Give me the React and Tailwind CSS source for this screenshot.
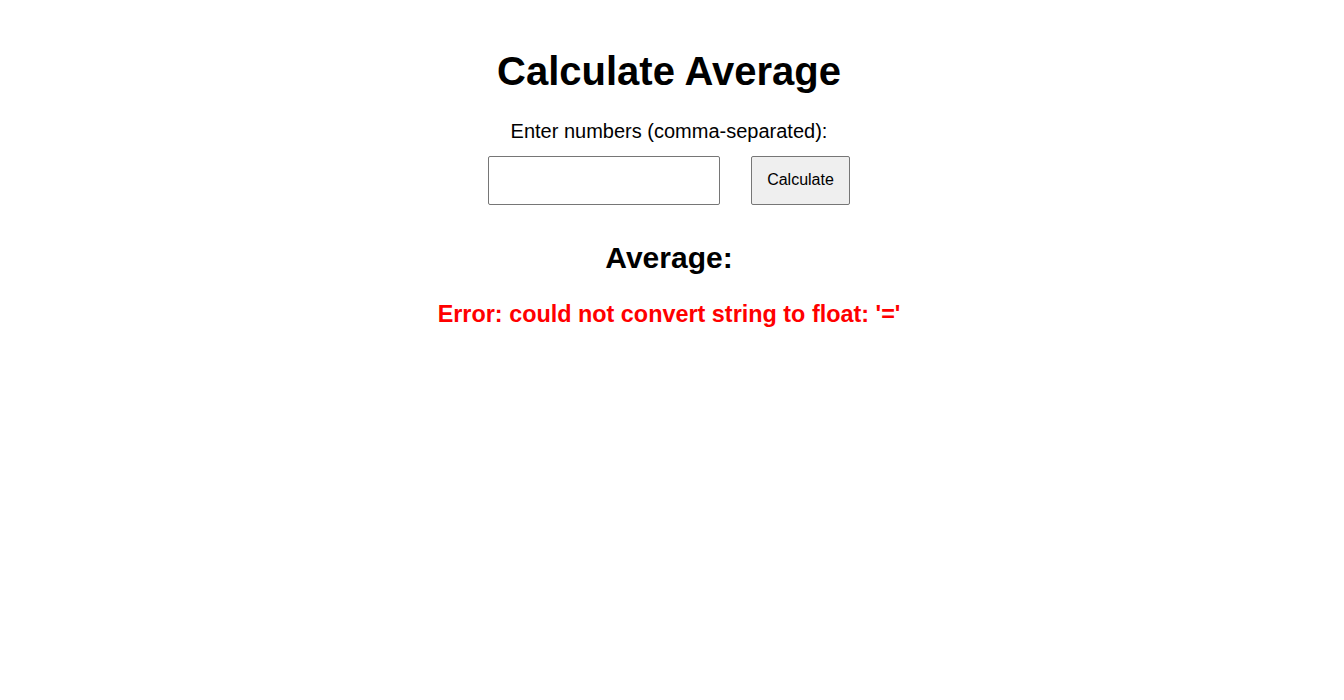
export default function App() {
  return (
    <div
      className="flex flex-col items-center bg-white text-black min-h-[700px] pr-[6px]"
      style={{ fontFamily: '"Liberation Sans", Arial, sans-serif' }}
    >
      <h1 className="mt-[48px] text-[40px] leading-[46px] font-bold">
        Calculate Average
      </h1>
      <label className="mt-[26px] text-[20px] leading-[23px]">
        Enter numbers (comma-separated):
      </label>
      <div className="mt-[13px] flex gap-[31px]">
        <input
          type="text"
          className="w-[232px] h-[49px] border border-[#767676] rounded-[2px] px-2 text-[16px] outline-none"
        />
        <button className="w-[99px] h-[49px] pb-[2px] border border-[#767676] rounded-[2px] bg-[#efefef] text-[16px]">
          Calculate
        </button>
      </div>
      <h2 className="mt-[35px] text-[30px] leading-[35px] font-bold">Average:</h2>
      <p className="mt-[25px] text-[23.4px] leading-[28px] font-bold text-[#ff0000]">
        Error: could not convert string to float: '='
      </p>
    </div>
  );
}
